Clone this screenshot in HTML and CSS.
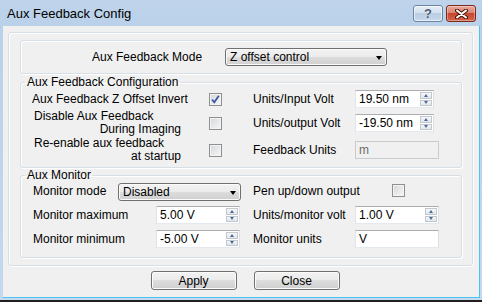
FILE: index.html
```html
<!DOCTYPE html>
<html lang="en">
<head>
  <meta charset="UTF-8">
  <title>Aux Feedback Config</title>
  <link rel="stylesheet" href="styles.css">
</head>
<body>
  <div class="window">
    <div class="titlebar">
      <span class="title">Aux Feedback Config</span>
      <div class="caption-buttons">
        <span class="cap-btn help">?</span>
        <span class="cap-btn close">
          <svg width="13" height="10" viewBox="0 0 13 10">
            <path d="M2 1.5 L11 8.5 M11 1.5 L2 8.5" stroke="#4a1309" stroke-width="4" stroke-linecap="round"/>
            <path d="M2 1.5 L11 8.5 M11 1.5 L2 8.5" stroke="#ffffff" stroke-width="2" stroke-linecap="round"/>
          </svg>
        </span>
      </div>
    </div>

    <div class="client">
      <div class="frame">
        <div class="mode-box">
          <span class="mode-label">Aux Feedback Mode</span>
          <div class="combo mode-combo">Z offset control<span class="arrow"></span></div>
        </div>

        <fieldset class="group">
          <legend>Aux Feedback Configuration</legend>
          <div class="config-grid">
            <span class="label">Aux Feedback Z Offset Invert</span>
            <span class="check checked">
              <svg width="11" height="11" viewBox="0 0 11 11"><path d="M2 5.5 L4.3 8.3 L8.8 1.8" stroke="#3a559c" stroke-width="1.7" fill="none"/></svg>
            </span>
            <span class="label">Units/Input Volt</span>
            <div class="spin short"><span>19.50 nm</span><span class="spin-btns"><i class="up"></i><i class="down"></i></span></div>

            <span class="label two-line"><span>Disable Aux Feedback</span><span class="line2">During Imaging</span></span>
            <span class="check"></span>
            <span class="label">Units/output Volt</span>
            <div class="spin short"><span>-19.50 nm</span><span class="spin-btns"><i class="up"></i><i class="down"></i></span></div>

            <span class="label two-line"><span>Re-enable aux feedback</span><span class="line2">at startup</span></span>
            <span class="check"></span>
            <span class="label">Feedback Units</span>
            <div class="textbox disabled">m</div>
          </div>
        </fieldset>

        <fieldset class="group monitor">
          <legend>Aux Monitor</legend>
          <div class="monitor-grid">
            <span class="label">Monitor mode</span>
            <div class="combo monitor-combo">Disabled<span class="arrow"></span></div>
            <span class="label">Pen up/down output</span>
            <span class="check pen"></span>

            <span class="label">Monitor maximum</span>
            <div class="spin left-spin"><span>5.00 V</span><span class="spin-btns"><i class="up"></i><i class="down"></i></span></div>
            <span class="label">Units/monitor volt</span>
            <div class="spin"><span>1.00 V</span><span class="spin-btns"><i class="up"></i><i class="down"></i></span></div>

            <span class="label">Monitor minimum</span>
            <div class="spin left-spin"><span>-5.00 V</span><span class="spin-btns"><i class="up"></i><i class="down"></i></span></div>
            <span class="label">Monitor units</span>
            <div class="textbox">V</div>
          </div>
        </fieldset>
      </div>

      <div class="actions">
        <button class="btn">Apply</button>
        <button class="btn">Close</button>
      </div>
    </div>
  </div>
</body>
</html>
```

FILE: styles.css
```css
body {
  margin: 0;
  font-family: "Liberation Sans", Arial, sans-serif;
  font-size: 12px;
  color: #000;
  background: #ffffff;
}

.window {
  width: 482px;
  height: 302px;
  box-sizing: border-box;
  background: linear-gradient(#bfd4eb, #bad1ea 26px, #c4d9ef);
  padding: 0 2px 2px 3px;
  border-bottom: 2px solid #1f1f1f;
  display: flex;
  flex-direction: column;
}

/* Title bar */
.titlebar {
  height: 26px;
  flex-shrink: 0;
  display: flex;
  justify-content: space-between;
  align-items: flex-start;
}

.title {
  font-size: 13px;
  line-height: 16px;
  padding: 6px 0 0 4px;
  color: #000;
}

.caption-buttons {
  display: flex;
  gap: 3px;
  margin: 5px 4px 0 0;
}

.cap-btn {
  width: 30px;
  height: 17px;
  box-sizing: border-box;
  border: 1px solid #6b84a1;
  border-radius: 3px;
  display: flex;
  align-items: center;
  justify-content: center;
}

.help {
  background: linear-gradient(#e6eef7, #d0deee 50%, #b9cde3 50%, #c8d9ec);
  box-shadow: inset 0 0 0 1px rgba(255, 255, 255, 0.6);
  font-weight: bold;
  font-size: 13px;
  color: #4a5a6c;
  text-shadow: 0 0 1px #fff;
}

.close {
  border-color: #7a2a1d;
  background: linear-gradient(#e9a99b, #d9806c 50%, #c6472f 50%, #d4644a);
  box-shadow: inset 0 0 0 1px rgba(255, 255, 255, 0.35);
}

/* Client area */
.client {
  flex: 1;
  background: #f0f0f0;
  padding: 6px 6px 0 5px;
  border-right: 1px solid #4cc3ec;
  border-bottom: 1px solid #4cc3ec;
  display: flex;
  flex-direction: column;
}

.frame {
  border: 1px solid #d5dfe5;
  border-radius: 3px;
  box-shadow: inset 1px 1px 0 #fff, 1px 1px 0 #fff;
  padding: 7px 10px 7px 11px;
}

.mode-box {
  height: 34px;
  box-sizing: border-box;
  border: 1px solid #d5dfe5;
  border-radius: 3px;
  box-shadow: inset 1px 1px 0 #fff, 1px 1px 0 #fff;
  display: grid;
  grid-template-columns: 133px 162px;
  align-items: center;
  padding-left: 71px;
}

.mode-label {
  text-align: right;
  padding-right: 31px;
  white-space: nowrap;
}

.group {
  margin: 2px 0 0;
  padding: 1px 0 4px 0;
  border: 1px solid #d5dfe5;
  border-radius: 3px;
  box-shadow: inset 1px 1px 0 #fff, 1px 1px 0 #fff;
  min-width: 0;
}

.group legend {
  margin-left: 4px;
  padding: 0 2px;
  line-height: 12px;
}

.monitor {
  margin-top: 1px;
  padding-bottom: 9px;
}

.config-grid {
  display: grid;
  grid-template-columns: 177px 44px 102px auto;
  grid-template-rows: 20px 24px 26px;
  row-gap: 2px;
  align-items: center;
  padding-left: 11px;
}

.monitor-grid {
  display: grid;
  grid-template-columns: 85px 135px 102px auto;
  grid-template-rows: 18px 18px 18px;
  row-gap: 6px;
  align-items: center;
  padding-left: 12px;
}

.label {
  white-space: nowrap;
  line-height: 14px;
}

.two-line {
  display: flex;
  flex-direction: column;
  width: 149px;
  line-height: 13px;
}

.two-line span:first-child {
  padding-left: 2px;
}

.two-line .line2 {
  align-self: flex-end;
}

/* Checkboxes */
.check {
  width: 13px;
  height: 13px;
  box-sizing: border-box;
  border: 1px solid #8e8f8f;
  background: linear-gradient(135deg, #d3d6da, #f8f8f8);
  box-shadow: inset 0 0 0 1px #f4f4f4;
  display: flex;
  align-items: center;
  justify-content: center;
}

.pen {
  margin-left: 37px;
  margin-top: -2px;
}

/* Combo boxes */
.combo {
  height: 18px;
  box-sizing: border-box;
  border: 1px solid #707070;
  border-radius: 3px;
  background: linear-gradient(#f2f2f2, #ebebeb 50%, #dddddd 50%, #cfcfcf);
  box-shadow: inset 0 0 0 1px #fbfbfb;
  padding-left: 4px;
  line-height: 16px;
  display: flex;
  align-items: center;
}

.combo .arrow {
  margin-left: auto;
  margin-right: 4px;
  margin-top: 2px;
  width: 0;
  height: 0;
  border-left: 3.5px solid transparent;
  border-right: 3.5px solid transparent;
  border-top: 4px solid #000;
}

.monitor-combo {
  width: 123px;
  margin-top: 1px;
}

/* Spin boxes and text boxes */
.spin,
.textbox {
  height: 18px;
  box-sizing: border-box;
  border: 1px solid;
  border-color: #abadb3 #dbdfe6 #e3e9ef #e2e3ea;
  background: #fff;
  padding-left: 3px;
  display: flex;
  align-items: center;
  width: 84px;
}

.spin.short {
  width: 79px;
}

.left-spin {
  margin-left: 38px;
}

.textbox.disabled {
  background: #f0f0f0;
  border-color: #c9cbce;
  color: #6d6d6d;
}

.spin-btns {
  margin-left: auto;
  margin-right: 1px;
  width: 12px;
  height: 14px;
  display: flex;
  flex-direction: column;
  gap: 1px;
}

.spin-btns i {
  flex: 1;
  box-sizing: border-box;
  border: 1px solid #c3c8ce;
  background: linear-gradient(#f6f7f8, #e2e6ea);
  display: flex;
  align-items: center;
  justify-content: center;
}

.spin-btns i::after {
  content: "";
  width: 0;
  height: 0;
  border-left: 2.5px solid transparent;
  border-right: 2.5px solid transparent;
}

.spin-btns .up::after {
  border-bottom: 3px solid #4b6b9c;
}

.spin-btns .down::after {
  border-top: 3px solid #4b6b9c;
}

/* Bottom buttons */
.actions {
  display: flex;
  justify-content: center;
  gap: 17px;
  margin-top: 5px;
  padding-left: 9px;
}

.btn {
  width: 86px;
  height: 19px;
  box-sizing: border-box;
  border: 1px solid #707070;
  border-radius: 3px;
  background: linear-gradient(#f2f2f2, #ebebeb 50%, #dddddd 50%, #cfcfcf);
  box-shadow: inset 0 0 0 1px #fcfcfc;
  font-family: "Liberation Sans", Arial, sans-serif;
  font-size: 12px;
  padding: 0;
  color: #000;
}
```
